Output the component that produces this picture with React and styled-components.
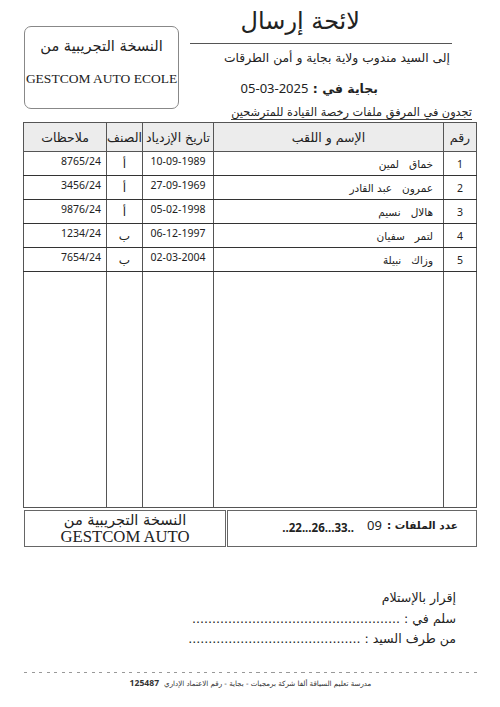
import React from "react";
import styled, { createGlobalStyle } from "styled-components";

const GlobalStyle = createGlobalStyle`
  html, body {
    margin: 0;
    padding: 0;
    background: #fff;
  }
  body {
    font-family: "DejaVu Sans", "Noto Sans", sans-serif;
    color: #222;
  }
`;

const rows = [
  { n: 1, name: "خماق   لمين", date: "10-09-1989", cls: "أ", note: "8765/24" },
  { n: 2, name: "عمرون   عبد القادر", date: "27-09-1969", cls: "أ", note: "3456/24" },
  { n: 3, name: "هالال   نسيم", date: "05-02-1998", cls: "أ", note: "9876/24" },
  { n: 4, name: "لتمر   سفيان", date: "06-12-1997", cls: "ب", note: "1234/24" },
  { n: 5, name: "وزاك   نبيلة", date: "02-03-2004", cls: "ب", note: "7654/24" },
];

const cols = [33, 230, 71, 36, 83];

const Page = styled.div`
  width: 500px;
  height: 707px;
  box-sizing: border-box;
  padding: 0 23px 0 24px;
  direction: rtl;
  overflow: hidden;
`;

const Header = styled.div`
  display: flex;
  justify-content: space-between;
  align-items: flex-start;
`;

const RightCol = styled.div`
  width: 287px;
  flex-shrink: 0;
  display: flex;
  flex-direction: column;
`;

const TitleWrap = styled.div`
  margin-right: 25px;
  border-bottom: 1px solid #555;
  padding: 3px 92px 4px 0;
  height: 36px;
  box-sizing: content-box;
`;

const Title = styled.h1`
  margin: 0;
  font-size: 24px;
  font-weight: 400;
  line-height: 36px;
  color: #222;
`;

const Line = styled.div`
  font-size: ${(p) => p.$size || 12.3}px;
  line-height: ${(p) => p.$lh || 20}px;
  font-weight: ${(p) => (p.$bold ? 700 : 400)};
  padding-right: ${(p) => p.$pr || 0}px;
  margin-top: ${(p) => p.$mt || 0}px;
  white-space: nowrap;
`;

const Num = styled.span`
  font-family: "Noto Sans", "DejaVu Sans", sans-serif;
  font-size: 13px;
  font-weight: 400;
`;

const Intro = styled.div`
  font-size: 11.3px;
  line-height: 17px;
  padding-right: 5px;
  margin-top: 5px;
  white-space: nowrap;
  span {
    border-bottom: 1px solid #444;
  }
`;

const TrialBox = styled.div`
  margin-top: 26px;
  width: 155px;
  height: 83px;
  box-sizing: border-box;
  border: 1px solid #888;
  border-radius: 7px;
  display: flex;
  flex-direction: column;
  align-items: center;
  padding-top: 8px;
`;

const TrialAr = styled.div`
  font-size: ${(p) => p.$size || 14.6}px;
  line-height: ${(p) => p.$lh || 22}px;
  white-space: nowrap;
`;

const TrialEn = styled.div`
  font-family: "Liberation Serif", "DejaVu Serif", serif;
  font-size: ${(p) => p.$size || 13.5}px;
  line-height: ${(p) => p.$lh || 20}px;
  margin-top: ${(p) => p.$mt || 0}px;
  white-space: nowrap;
  direction: ltr;
`;

const Table = styled.table`
  margin-top: 1px;
  width: 453px;
  border-collapse: collapse;
  table-layout: fixed;
  border: 1px solid #555;
`;

const Th = styled.th`
  height: 28px;
  background: #ececec;
  border: 1px solid #555;
  font-size: 12.5px;
  font-weight: 400;
  padding: 0;
  text-align: center;
  white-space: nowrap;
  overflow: hidden;
`;

const Row = styled.tr`
  height: 24px;
`;

const Td = styled.td`
  border-top: 1px solid #333;
  border-bottom: 1px solid #333;
  border-left: 1px solid #555;
  border-right: 1px solid #555;
  padding: ${(p) => (p.$top ? "2px 5px 0 5px" : "0 10px")};
  font-size: ${(p) => p.$size || 10.5}px;
  line-height: 14px;
  vertical-align: ${(p) => (p.$top ? "top" : "middle")};
  text-align: ${(p) => p.$align || "center"};
  font-family: ${(p) =>
    p.$num ? '"Noto Sans", "DejaVu Sans", sans-serif' : '"DejaVu Sans", sans-serif'};
  white-space: pre;
  color: #222;
`;

const FillRow = styled.tr`
  height: 236px;
`;

const FillTd = styled.td`
  border-left: 1px solid #555;
  border-right: 1px solid #555;
  border-top: 1px solid #333;
  padding: 0;
`;

const Summary = styled.div`
  margin-top: 2px;
  display: flex;
  justify-content: space-between;
  height: 37px;
`;

const SumBox = styled.div`
  width: ${(p) => p.$w}px;
  box-sizing: border-box;
  border: 1px solid #666;
  border-width: 1px 1.5px 1.5px 1px;
  display: flex;
  flex-direction: ${(p) => (p.$col ? "column" : "row")};
  align-items: ${(p) => (p.$col ? "center" : "flex-start")};
  padding: ${(p) => (p.$col ? "1px 0 0" : "6px 18px 0 0")};
`;

const Count = styled.span`
  font-size: 10.5px;
  font-weight: 700;
  line-height: 16px;
`;

const CountNum = styled.span`
  font-family: "Noto Sans", "DejaVu Sans", sans-serif;
  font-size: 13px;
  line-height: 16px;
  margin-right: 5px;
`;

const Dots = styled.span`
  direction: ltr;
  font-family: "Noto Sans", "DejaVu Sans", sans-serif;
  font-size: 11.5px;
  font-weight: 700;
  line-height: 16px;
  margin-top: 3px;
  margin-right: 13px;
`;

const Ack = styled.div`
  margin-top: 41px;
  padding-right: 21px;
  display: flex;
  flex-direction: column;
`;

const AckLine = styled.div`
  font-size: 12.6px;
  line-height: 20.5px;
  white-space: nowrap;
`;

const Footer = styled.div`
  margin-top: 22px;
`;

const Dashed = styled.div`
  height: 1px;
  background: repeating-linear-gradient(to left, #999 0 3px, transparent 3px 7.5px);
`;

const FootText = styled.div`
  margin-top: 3px;
  text-align: center;
  font-size: 7.1px;
  line-height: 14px;
  color: #333;
  b {
    font-family: "Noto Sans", "DejaVu Sans", sans-serif;
    font-size: 8.6px;
    margin-right: 5px;
  }
`;

export default function App() {
  return (
    <>
      <GlobalStyle />
      <Page>
        <Header>
          <RightCol>
            <TitleWrap>
              <Title>لائحة إرسال</Title>
            </TitleWrap>
            <Line $mt={4} $pr={27}>إلى السيد مندوب ولاية بجاية و أمن الطرقات</Line>
            <Line $mt={10} $pr={99} $bold $size={12.5}>
              بجاية في : <Num>2025-03-05</Num>
            </Line>
            <Intro>
              <span>تجدون في المرفق ملفات رخصة القيادة للمترشحين</span>
            </Intro>
          </RightCol>
          <TrialBox>
            <TrialAr>النسخة التجريبية من</TrialAr>
            <TrialEn $mt={12}>GESTCOM AUTO ECOLE</TrialEn>
          </TrialBox>
        </Header>

        <Table>
          <colgroup>
            {cols.map((w, i) => (
              <col key={i} style={{ width: w }} />
            ))}
          </colgroup>
          <thead>
            <tr>
              <Th>رقم</Th>
              <Th>الإسم و اللقب</Th>
              <Th>تاريخ الإزدياد</Th>
              <Th>الصنف</Th>
              <Th>ملاحظات</Th>
            </tr>
          </thead>
          <tbody>
            {rows.map((r) => (
              <Row key={r.n}>
                <Td $num>{r.n}</Td>
                <Td $align="right">{r.name}</Td>
                <Td $num $top>{r.date}</Td>
                <Td $size={12}>{r.cls}</Td>
                <Td $num $top $align="right">{r.note}</Td>
              </Row>
            ))}
            <FillRow>
              <FillTd />
              <FillTd />
              <FillTd />
              <FillTd />
              <FillTd />
            </FillRow>
          </tbody>
        </Table>

        <Summary>
          <SumBox $w={250}>
            <Count>عدد الملفات :</Count>
            <CountNum>09</CountNum>
            <Dots>..22...26...33..</Dots>
          </SumBox>
          <SumBox $w={202} $col>
            <TrialAr $lh={16}>النسخة التجريبية من</TrialAr>
            <TrialEn $size={16.7} $lh={18}>GESTCOM AUTO</TrialEn>
          </SumBox>
        </Summary>

        <Ack>
          <AckLine>إقرار بالإستلام</AckLine>
          <AckLine>سلم في : ....................................................</AckLine>
          <AckLine>من طرف السيد : ...........................................</AckLine>
        </Ack>

        <Footer>
          <Dashed />
          <FootText>
            مدرسة تعليم السياقة ألفا شركة برمجيات - بجاية - رقم الاعتماد الإداري
            <b>125487</b>
          </FootText>
        </Footer>
      </Page>
    </>
  );
}
